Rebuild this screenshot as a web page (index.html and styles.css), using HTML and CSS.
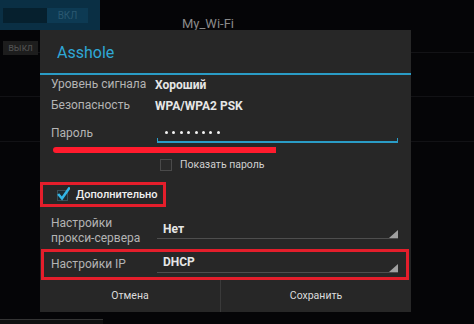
FILE: index.html
```html
<!DOCTYPE html>
<html lang="ru">
<head>
<meta charset="utf-8">
<title>Wi-Fi</title>
<link rel="stylesheet" href="styles.css">
</head>
<body>
<div class="screen">
  <div class="bg-top">
    <div class="panel">
      <div class="switch"><span class="sw-off"></span><span class="sw-on">ВКЛ</span></div>
    </div>
    <div class="wifi-name">My_Wi-Fi</div>
  </div>
  <div class="bg-row">
    <div class="off-btn">выкл</div>
    <div class="bg-fill"></div>
  </div>
  <div class="bg-line l1"></div>
  <div class="bg-line l2"></div>
  <div class="bg-bottom"></div>

  <div class="dialog">
    <div class="title">Asshole</div>
    <div class="title-rule"></div>
    <div class="content">
      <div class="row info1">
        <div class="label w104">Уровень сигнала</div>
        <div class="value">Хороший</div>
      </div>
      <div class="row info2">
        <div class="label w104">Безопасность</div>
        <div class="value">WPA/WPA2 PSK</div>
      </div>
      <div class="row pw">
        <div class="label w106 pw-label">Пароль</div>
        <div class="edit">
          <div class="dots">
            <span></span><span></span><span></span><span></span><span></span><span></span><span></span><span></span>
          </div>
          <div class="edit-line"></div>
        </div>
      </div>
      <div class="row show">
        <span class="cb"></span>
        <span class="show-label">Показать пароль</span>
      </div>
      <div class="adv-box">
        <svg class="cb-checked" width="13" height="14" viewBox="0 0 13 14">
          <rect x="0.5" y="3.5" width="10" height="10" fill="#1c2a30" stroke="#3a4f58" stroke-width="1"/>
          <polyline points="2,8 5,11.5 12,1.5" fill="none" stroke="#33b5e5" stroke-width="2.6" stroke-linecap="square"/>
        </svg>
        <span class="adv-label">Дополнительно</span>
      </div>
      <div class="row proxy">
        <div class="label w106 two-line">Настройки<br>прокси-сервера</div>
        <div class="spinner proxy-sp">
          <span class="sp-value">Нет</span>
          <svg class="sp-tri" width="9" height="8" viewBox="0 0 9 8"><polygon points="9,0 9,8 0,8" fill="#a0a0a0"/></svg>
        </div>
      </div>
      <div class="ip-box">
        <div class="label w106">Настройки IP</div>
        <div class="spinner ip-sp">
          <span class="sp-value">DHCP</span>
          <svg class="sp-tri" width="9" height="8" viewBox="0 0 9 8"><polygon points="9,0 9,8 0,8" fill="#a0a0a0"/></svg>
        </div>
      </div>
    </div>
    <div class="buttons">
      <div class="btn btn-left">Отмена</div>
      <div class="btn-div"></div>
      <div class="btn btn-right">Сохранить</div>
    </div>
    <div class="mark-line"></div>
  </div>
</div>
</body>
</html>
```
FILE: styles.css
```css
html, body {
  margin: 0;
  padding: 0;
  background: #050507;
}
body {
  font-family: Roboto, "Liberation Sans", sans-serif;
  width: 474px;
  height: 324px;
  overflow: hidden;
}
.screen {
  position: relative;
  width: 474px;
  height: 324px;
  overflow: hidden;
}

/* background */
.bg-top {
  display: flex;
  height: 30px;
  overflow: hidden;
}
.panel {
  width: 97px;
  height: 30px;
  background: #0a2f44;
  padding: 8px 0 0 3px;
  box-sizing: content-box;
}
.switch {
  display: flex;
  width: 85px;
  height: 15px;
}
.sw-off {
  width: 44px;
  background: #06202e;
}
.sw-on {
  flex: 1;
  background: #0d3a53;
  color: #2a5870;
  font-size: 10px;
  line-height: 15px;
  text-align: center;
}
.wifi-name {
  margin-left: 82px;
  padding-top: 17px;
  font-size: 13px;
  line-height: 14px;
  color: #8a8a8a;
}
.bg-row {
  display: flex;
  align-items: flex-start;
  margin-top: 11px;
  height: 14px;
}
.off-btn {
  margin-left: 3px;
  width: 35px;
  height: 14px;
  background: #1d1d1d;
  color: #505050;
  font-size: 10px;
  line-height: 14px;
  text-align: center;
}
.bg-fill {
  flex: 1;
  height: 11px;
  border-bottom: 1px solid #131316;
}
.bg-line {
  height: 1px;
  background: #121215;
}
.l1 { margin-top: 41px; }
.l2 { margin-top: 44px; }
.bg-bottom {
  margin-top: 177px;
  width: 103px;
  height: 5px;
  border-top: 1px solid #343434;
  background: #101010;
}

/* dialog */
.dialog {
  position: absolute;
  left: 40px;
  top: 30px;
  width: 371px;
  height: 282px;
  background: #272727;
  display: flex;
  flex-direction: column;
}
.title {
  height: 41px;
  padding: 2px 0 0 17px;
  display: flex;
  align-items: center;
  font-size: 16px;
  color: #2fa8d6;
}
.title-rule {
  height: 2px;
  background: #2a9cc6;
}
.content {
  padding: 0 13px 0 11px;
  display: flex;
  flex-direction: column;
}
.row {
  display: flex;
  align-items: center;
}
.label {
  flex: none;
  font-size: 12px;
  line-height: 15px;
  color: #b4b4b4;
}
.w104 { width: 104px; }
.w106 { width: 106px; }
.value {
  font-size: 12px;
  font-weight: bold;
  color: #e6e6e6;
}
.info1 { height: 19px; }
.info2 { height: 23px; }
.pw {
  height: 26px;
  align-items: flex-end;
}
.pw-label {
  margin-bottom: 2px;
}
.edit {
  flex: 1;
  display: flex;
  flex-direction: column;
  height: 26px;
}
.dots {
  flex: 1;
  display: flex;
  align-items: center;
  gap: 4.4px;
  padding: 9px 0 0 8px;
}
.dots span {
  width: 3px;
  height: 3px;
  border-radius: 50%;
  background: #f2f2f2;
}
.edit-line {
  height: 3px;
  border: 2px solid #2a9cc6;
  border-top: 0;
  border-left-width: 1px;
  border-right-width: 1px;
}
.show {
  padding: 16px 0 0 109px;
  height: 11px;
  box-sizing: content-box;
}
.cb {
  width: 10px;
  height: 10px;
  border: 1px solid #4a4a4a;
  background: #2a2a2a;
}
.show-label {
  margin-left: 8px;
  font-size: 10.5px;
  color: #d0d0d0;
}
.adv-box {
  margin: 12px 0 0 -11px;
  height: 19px;
  border: 3px solid #e41e2b;
  display: flex;
  align-items: center;
  padding-left: 14px;
  box-sizing: content-box;
  width: 106px;
}
.cb-checked {
  margin-top: -2px;
}
.adv-label {
  margin-left: 6px;
  font-size: 11px;
  font-weight: 500;
  color: #f0f0f0;
}
.proxy {
  height: 42px;
  align-items: flex-start;
}
.two-line {
  padding-top: 9px;
}
.spinner {
  flex: 1;
  display: flex;
  align-items: center;
  border-bottom: 1px solid #4e4e4e;
}
.proxy-sp {
  margin-top: 9px;
  height: 18px;
  padding-top: 4px;
}
.sp-value {
  flex: 1;
  padding-left: 6px;
  font-size: 12px;
  font-weight: bold;
  color: #e6e6e6;
}
.sp-tri {
  align-self: flex-end;
  flex: none;
}
.ip-box {
  margin: 0 -11px 0 -10px;
  height: 25px;
  border: 3px solid #e41e2b;
  display: flex;
  align-items: center;
  padding: 0 8px 0 7px;
}
.ip-sp {
  height: 19px;
  margin-bottom: 4px;
}

/* buttons */
.buttons {
  flex: 1;
  display: flex;
}
.btn {
  display: flex;
  align-items: center;
  justify-content: center;
  font-size: 10.5px;
  color: #dcdcdc;
  padding-bottom: 1px;
}
.btn-left { width: 180px; }
.btn-right { flex: 1; }
.btn-div {
  width: 1px;
  background: #3a3a3a;
}

/* annotation */
.mark-line {
  position: absolute;
  left: 13px;
  top: 117px;
  width: 223px;
  height: 6px;
  border-radius: 3px 0 0 3px;
  background: #ff1b2d;
}
```
